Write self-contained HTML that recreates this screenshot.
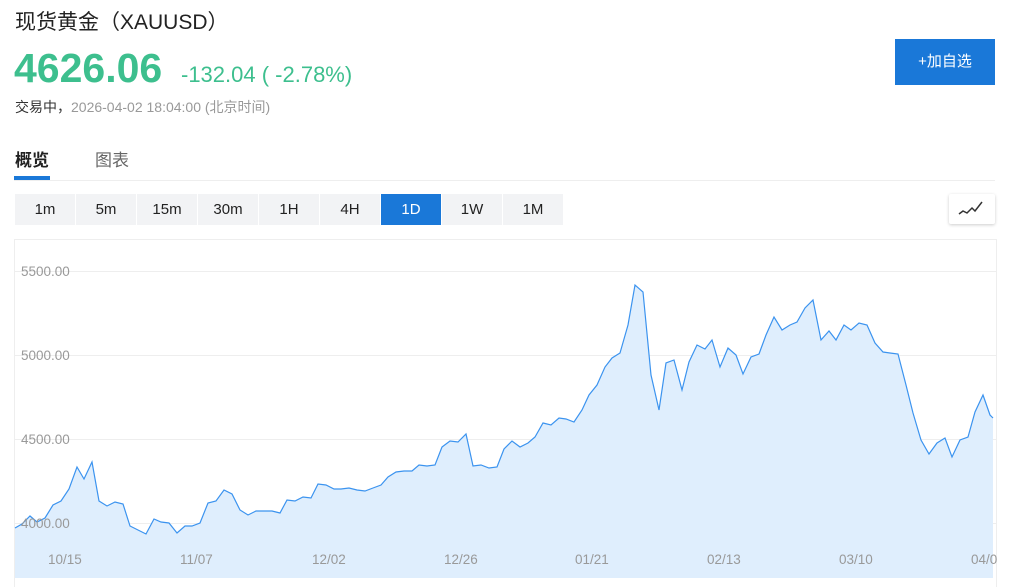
<!DOCTYPE html>
<html><head><meta charset="utf-8"><style>
body{margin:0;width:1024px;height:587px;overflow:hidden;background:#fff;font-family:"Liberation Sans","Noto Sans CJK SC",sans-serif;position:relative}
.a{position:absolute;white-space:nowrap}
.tf{position:absolute;top:194px;height:31px;width:60px;background:#f2f3f5;font-size:15px;color:#222;text-align:center;line-height:31px}
</style></head><body>
<div class="a" style="left:15px;top:6px;font-size:21px;color:#222">现货黄金（XAUUSD）</div>
<div class="a" style="left:14px;top:45px;font-size:41px;font-weight:bold;color:#3dbf8e;letter-spacing:0px">4626.06</div>
<div class="a" style="left:181px;top:62px;font-size:22px;color:#3dbf8e">-132.04 ( -2.78%)</div>
<div class="a" style="left:15px;top:97px;font-size:14px;color:#333;font-weight:normal">交易中，<span style="color:#999">2026-04-02 18:04:00 (北京时间)</span></div>
<div class="a" style="left:895px;top:39px;width:100px;height:46px;background:#1a78d8;color:#fff;font-size:15px;text-align:center;line-height:46px">+加自选</div>
<div class="a" style="left:15px;top:146px;font-size:17px;font-weight:bold;color:#222">概览</div>
<div class="a" style="left:95px;top:146px;font-size:17px;color:#666">图表</div>
<div class="a" style="left:14px;top:176px;width:36px;height:4px;background:#1a78d8"></div>
<div class="a" style="left:14px;top:180px;width:981px;height:1px;background:#eee"></div>
<div class="tf" style="left:15px">1m</div><div class="tf" style="left:76px">5m</div><div class="tf" style="left:137px">15m</div><div class="tf" style="left:198px">30m</div><div class="tf" style="left:259px">1H</div><div class="tf" style="left:320px">4H</div><div class="tf" style="left:381px;background:#1a78d8;color:#fff">1D</div><div class="tf" style="left:442px">1W</div><div class="tf" style="left:503px">1M</div>
<div class="a" style="left:949px;top:194px;width:46px;height:30px;background:#fff;box-shadow:0 1px 3px rgba(0,0,0,.2);border-radius:2px">
<svg width="46" height="30"><polyline points="10,20 14,17 18,19 23,14 26,17 33,8" fill="none" stroke="#333" stroke-width="1.5"/></svg></div>
<svg class="a" style="left:0;top:0" width="1024" height="587">
<rect x="14.5" y="239.5" width="982" height="360" fill="none" stroke="#eee"/>
<g stroke="#eee"><line x1="15" y1="271.5" x2="996" y2="271.5"/><line x1="15" y1="355.5" x2="996" y2="355.5"/><line x1="15" y1="439.5" x2="996" y2="439.5"/><line x1="15" y1="523.5" x2="996" y2="523.5"/></g>
<polygon fill="#dfeefd" points="15,578 15,528 22,524 30,516 37,522 45,518 53,505 61,501 69,489 77,467 84,479 92,462 99,501 107,506 115,502 123,504 130,526 138,530 146,534 154,519 161,522 169,523 177,533 185,526 192,526 200,523 208,503 216,501 224,490 232,494 240,510 248,515 256,511 264,511 272,511 280,513 287,500 295,501 303,497 311,498 318,484 326,485 334,489 341,489 349,488 357,490 365,491 373,488 381,485 388,477 396,472 404,471 412,471 419,465 427,466 435,465 442,447 450,441 458,442 466,434 473,466 481,465 489,468 497,467 504,449 512,441 520,447 528,443 535,437 543,423 551,425 559,418 566,419 574,422 582,410 589,395 597,385 605,367 612,358 620,353 628,325 635,285 643,292 651,375 659,410 666,363 674,360 682,390 689,362 697,345 705,349 712,340 720,367 728,348 736,355 743,374 751,357 759,354 766,335 774,317 782,330 790,325 797,322 805,308 813,300 821,340 829,331 836,340 844,325 851,330 859,323 867,325 875,343 883,352 890,353 898,354 906,385 913,413 921,440 929,454 937,443 945,438 952,457 960,440 968,437 975,412 983,395 990,415 993,418 993,578"/>
<polyline fill="none" stroke="#3b93ef" stroke-width="1.2" points="15,528 22,524 30,516 37,522 45,518 53,505 61,501 69,489 77,467 84,479 92,462 99,501 107,506 115,502 123,504 130,526 138,530 146,534 154,519 161,522 169,523 177,533 185,526 192,526 200,523 208,503 216,501 224,490 232,494 240,510 248,515 256,511 264,511 272,511 280,513 287,500 295,501 303,497 311,498 318,484 326,485 334,489 341,489 349,488 357,490 365,491 373,488 381,485 388,477 396,472 404,471 412,471 419,465 427,466 435,465 442,447 450,441 458,442 466,434 473,466 481,465 489,468 497,467 504,449 512,441 520,447 528,443 535,437 543,423 551,425 559,418 566,419 574,422 582,410 589,395 597,385 605,367 612,358 620,353 628,325 635,285 643,292 651,375 659,410 666,363 674,360 682,390 689,362 697,345 705,349 712,340 720,367 728,348 736,355 743,374 751,357 759,354 766,335 774,317 782,330 790,325 797,322 805,308 813,300 821,340 829,331 836,340 844,325 851,330 859,323 867,325 875,343 883,352 890,353 898,354 906,385 913,413 921,440 929,454 937,443 945,438 952,457 960,440 968,437 975,412 983,395 990,415 993,418"/>
<g font-family="Liberation Sans,sans-serif" font-size="13.5" fill="#999">
<text x="21" y="276">5500.00</text><text x="21" y="360">5000.00</text><text x="21" y="444">4500.00</text><text x="21" y="528">4000.00</text>
<text x="48" y="564">10/15</text><text x="180" y="564">11/07</text><text x="312" y="564">12/02</text><text x="444" y="564">12/26</text><text x="575" y="564">01/21</text><text x="707" y="564">02/13</text><text x="839" y="564">03/10</text><text x="971" y="564">04/0</text>
</g></svg>
</body></html>
